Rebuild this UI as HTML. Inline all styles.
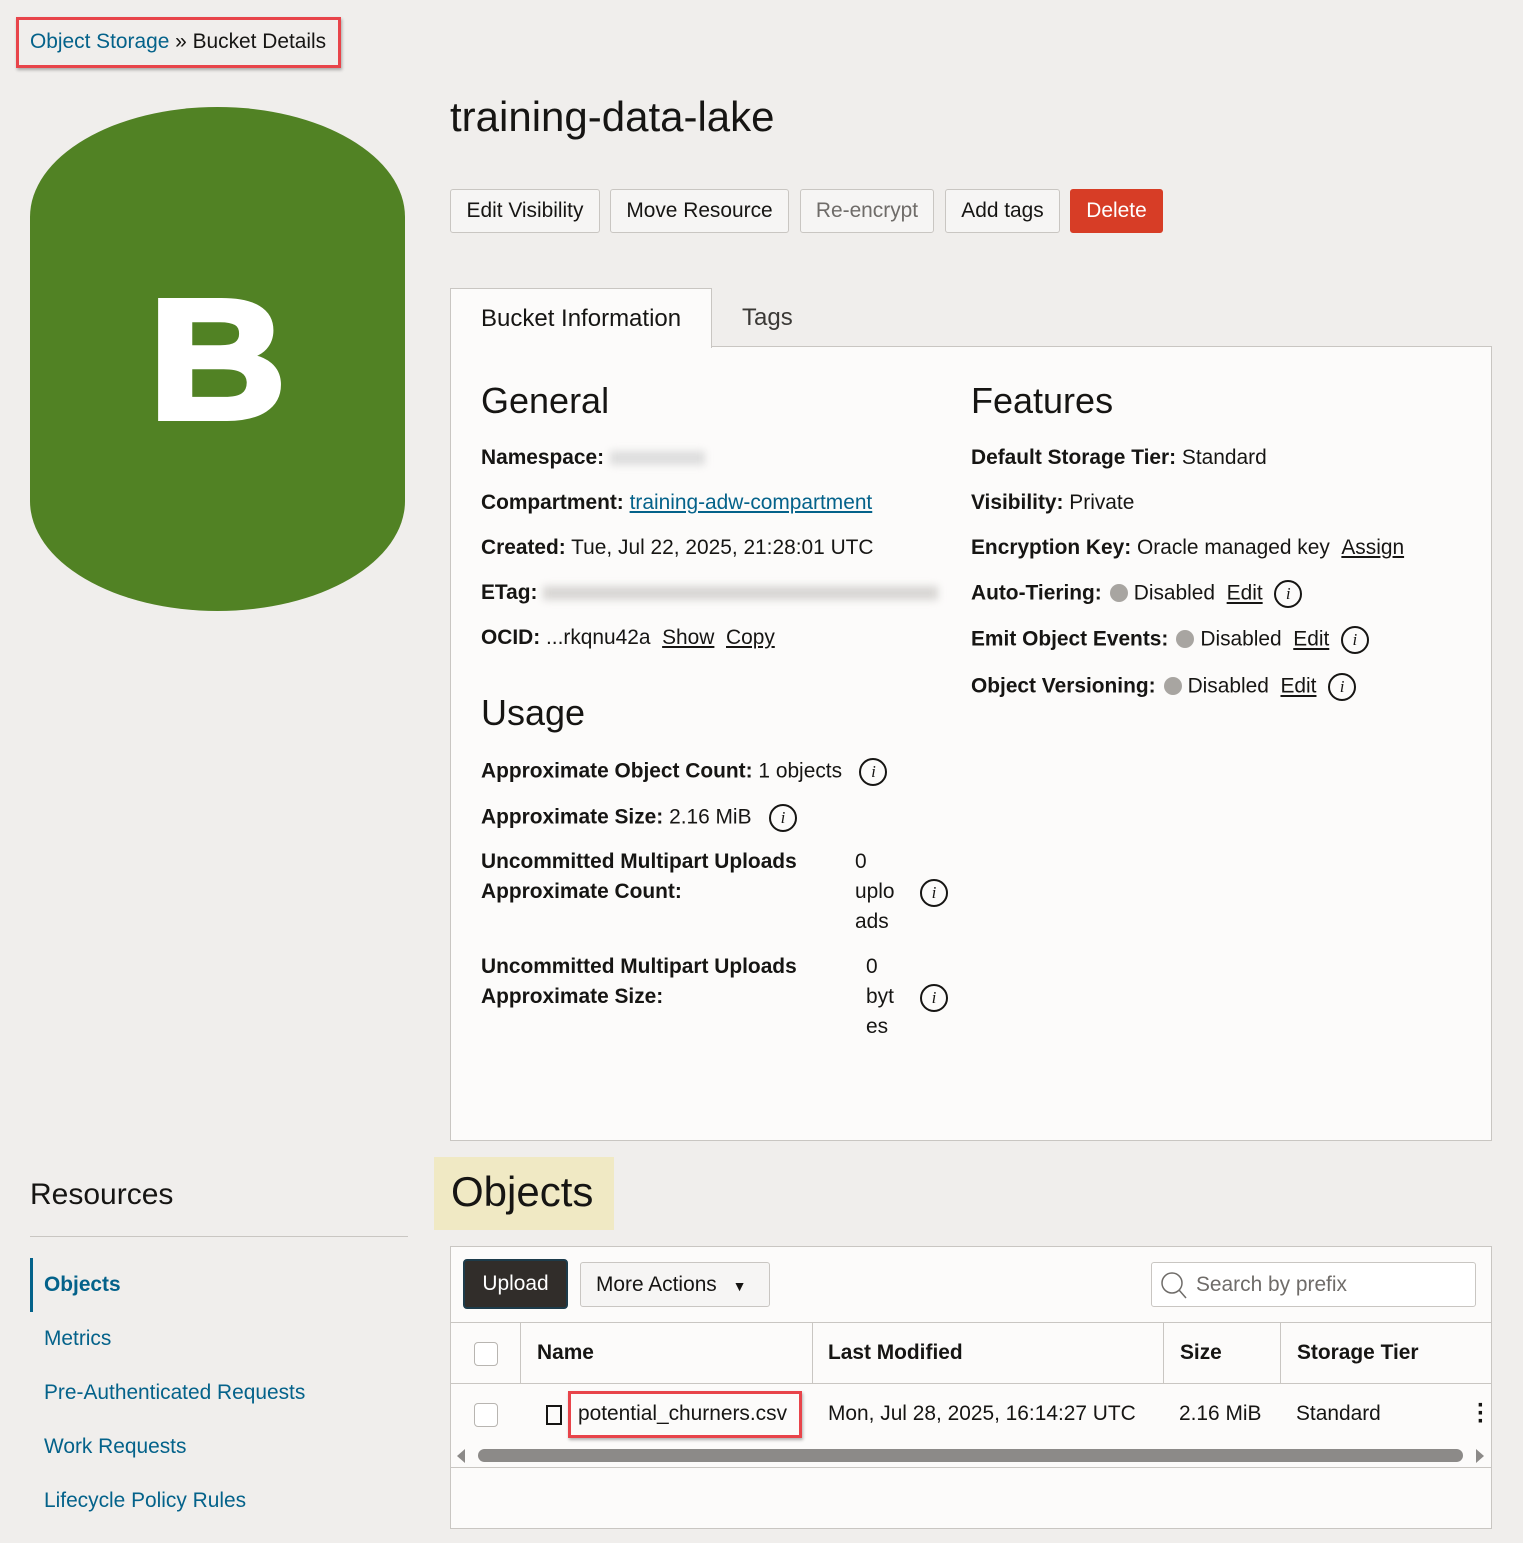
<!DOCTYPE html>
<html><head><meta charset="utf-8"><style>
*{box-sizing:border-box;margin:0;padding:0}
body{width:1523px;height:1543px;background:#f0eeec;font-family:"Liberation Sans",sans-serif;color:#161513;position:relative;overflow:hidden;font-size:20.9px}
.a{position:absolute;white-space:nowrap}
.btn{position:absolute;top:189px;height:44px;border:1px solid #c9c6c2;border-radius:3px;background:#f6f5f4;font-size:20.9px;line-height:42px;text-align:center}
a,.lk{color:#04628a;text-decoration:underline}
.u{color:#161513;text-decoration:underline}
b{font-weight:bold}
.info{display:inline-block;width:28px;height:28px;border:2px solid #161513;border-radius:50%;font:italic 17px "Liberation Serif",serif;text-align:center;line-height:24px;vertical-align:middle}
.dot{display:inline-block;width:18px;height:18px;border-radius:50%;background:#a8a5a1;vertical-align:-2px;margin:0 6px 0 8px}
.cb{position:absolute;width:24px;height:24px;border:1px solid #b8b5b1;border-radius:4px;background:#fff}
.nav{position:absolute;left:44px;color:#04628a;font-size:20.9px}
</style></head><body>
<div class="a" style="left:16px;top:17px;width:325px;height:51px;border:3px solid #e8444a;box-shadow:1px 2px 3px rgba(0,0,0,.3)"></div>
<div class="a" style="left:30px;top:30px"><span style="color:#04628a">Object Storage</span> » Bucket Details</div>

<div class="a" style="left:30px;top:107px;width:375px;height:504px;background:#518224;border-radius:50%/110px"></div>
<div class="a" style="left:30px;top:230px;width:375px;text-align:center;color:#fff;font-weight:bold;font-size:170px;line-height:260px;transform:scaleX(1.12);-webkit-text-stroke:6px #fff">B</div>

<div class="a" style="left:450px;top:93px;font-size:42px">training-data-lake</div>
<div class="btn" style="left:450px;width:150px">Edit Visibility</div>
<div class="btn" style="left:610px;width:179px">Move Resource</div>
<div class="btn" style="left:800px;width:134px;color:#6f6c69">Re-encrypt</div>
<div class="btn" style="left:945px;width:115px">Add tags</div>
<div class="btn" style="left:1070px;width:93px;background:#d73d26;border-color:#d73d26;color:#fff">Delete</div>

<div class="a" style="left:450px;top:346px;width:1042px;height:795px;border:1px solid #c9c6c2;background:#fcfbfa"></div>
<div class="a" style="left:450px;top:288px;width:262px;height:60px;border:1px solid #c9c6c2;border-bottom:none;background:#fcfbfa;font-size:24px;padding:16px 0 0 30px">Bucket Information</div>
<div class="a" style="left:742px;top:304px;font-size:24px;color:#3b3936">Tags</div>

<div class="a" style="left:481px;top:380px;font-size:36px">General</div>
<div class="a" style="left:481px;top:446px"><b>Namespace:</b> <span style="display:inline-block;width:95px;height:14px;background:#ddd;filter:blur(4px);vertical-align:middle"></span></div>
<div class="a" style="left:481px;top:491px"><b>Compartment:</b> <a>training-adw-compartment</a></div>
<div class="a" style="left:481px;top:536px"><b>Created:</b> Tue, Jul 22, 2025, 21:28:01 UTC</div>
<div class="a" style="left:481px;top:581px"><b>ETag:</b> <span style="display:inline-block;width:395px;height:14px;background:#d8d6d4;filter:blur(4px);vertical-align:middle"></span></div>
<div class="a" style="left:481px;top:626px"><b>OCID:</b> ...rkqnu42a &nbsp;<span class="u">Show</span> &nbsp;<span class="u">Copy</span></div>

<div class="a" style="left:481px;top:692px;font-size:36px">Usage</div>
<div class="a" style="left:481px;top:758px"><b>Approximate Object Count:</b> 1 objects &nbsp; <span class="info">i</span></div>
<div class="a" style="left:481px;top:804px"><b>Approximate Size:</b> 2.16 MiB &nbsp; <span class="info">i</span></div>
<div class="a" style="left:481px;top:847px;line-height:30px"><b>Uncommitted Multipart Uploads<br>Approximate Count:</b></div>
<div class="a" style="left:855px;top:847px;line-height:30px">0<br>uplo<br>ads</div>
<div class="a" style="left:920px;top:879px"><span class="info">i</span></div>
<div class="a" style="left:481px;top:952px;line-height:30px"><b>Uncommitted Multipart Uploads<br>Approximate Size:</b></div>
<div class="a" style="left:866px;top:952px;line-height:30px">0<br>byt<br>es</div>
<div class="a" style="left:920px;top:984px"><span class="info">i</span></div>

<div class="a" style="left:971px;top:380px;font-size:36px">Features</div>
<div class="a" style="left:971px;top:446px"><b>Default Storage Tier:</b> Standard</div>
<div class="a" style="left:971px;top:491px"><b>Visibility:</b> Private</div>
<div class="a" style="left:971px;top:536px"><b>Encryption Key:</b> Oracle managed key &nbsp;<span class="u">Assign</span></div>
<div class="a" style="left:971px;top:580px"><b>Auto-Tiering:</b><span class="dot"></span>Disabled &nbsp;<span class="u">Edit</span> &nbsp;<span class="info">i</span></div>
<div class="a" style="left:971px;top:626px"><b>Emit Object Events:</b><span class="dot"></span>Disabled &nbsp;<span class="u">Edit</span> &nbsp;<span class="info">i</span></div>
<div class="a" style="left:971px;top:673px"><b>Object Versioning:</b><span class="dot"></span>Disabled &nbsp;<span class="u">Edit</span> &nbsp;<span class="info">i</span></div>

<div class="a" style="left:30px;top:1178px;font-size:30px">Resources</div>
<div class="a" style="left:30px;top:1236px;width:378px;height:1px;background:#c9c6c2"></div>
<div class="a" style="left:30px;top:1258px;width:3px;height:54px;background:#04628a"></div>
<div class="nav" style="top:1273px;font-weight:bold">Objects</div>
<div class="nav" style="top:1327px">Metrics</div>
<div class="nav" style="top:1381px">Pre-Authenticated Requests</div>
<div class="nav" style="top:1435px">Work Requests</div>
<div class="nav" style="top:1489px">Lifecycle Policy Rules</div>

<div class="a" style="left:434px;top:1157px;width:180px;height:73px;background:#f0e9c4"></div>
<div class="a" style="left:451px;top:1168px;font-size:42px">Objects</div>

<div class="a" style="left:450px;top:1246px;width:1042px;height:283px;border:1px solid #c9c6c2;background:#fcfbfa"></div>
<div class="a" style="left:463px;top:1259px;width:105px;height:50px;background:#312d2a;border:2px solid #1d3b4a;border-radius:4px;color:#fff;text-align:center;line-height:46px">Upload</div>
<div class="a" style="left:580px;top:1262px;width:190px;height:45px;border:1px solid #c9c6c2;border-radius:3px;background:#f6f5f4;line-height:43px;padding-left:15px">More Actions <span style="font-size:14px;margin-left:10px">▼</span></div>
<div class="a" style="left:1151px;top:1262px;width:325px;height:45px;border:1px solid #c9c6c2;border-radius:3px;background:#fff;line-height:43px;padding-left:44px;color:#6f6c69">Search by prefix</div>
<svg class="a" style="left:1158px;top:1270px" width="32" height="32"><circle cx="14" cy="13" r="10" fill="none" stroke="#6f6c69" stroke-width="1.5"/><path d="M21 20l7 8" stroke="#6f6c69" stroke-width="1.5"/></svg>

<div class="a" style="left:451px;top:1322px;width:1040px;height:1px;background:#c9c6c2"></div>
<div class="a" style="left:451px;top:1383px;width:1040px;height:1px;background:#c9c6c2"></div>
<div class="a" style="left:520px;top:1323px;width:1px;height:60px;background:#c9c6c2"></div>
<div class="a" style="left:812px;top:1323px;width:1px;height:60px;background:#c9c6c2"></div>
<div class="a" style="left:1163px;top:1323px;width:1px;height:60px;background:#c9c6c2"></div>
<div class="a" style="left:1280px;top:1323px;width:1px;height:60px;background:#c9c6c2"></div>
<div class="cb" style="left:474px;top:1342px"></div>
<div class="a" style="left:537px;top:1341px;font-weight:bold">Name</div>
<div class="a" style="left:828px;top:1341px;font-weight:bold">Last Modified</div>
<div class="a" style="left:1180px;top:1341px;font-weight:bold">Size</div>
<div class="a" style="left:1297px;top:1341px;font-weight:bold">Storage Tier</div>

<div class="cb" style="left:474px;top:1403px"></div>
<div class="a" style="left:546px;top:1405px;width:16px;height:20px;border:2px solid #161513"></div>
<div class="a" style="left:568px;top:1391px;width:234px;height:47px;border:3px solid #e8444a;box-shadow:1px 2px 3px rgba(0,0,0,.3)"></div>
<div class="a" style="left:578px;top:1402px">potential_churners.csv</div>
<div class="a" style="left:828px;top:1402px">Mon, Jul 28, 2025, 16:14:27 UTC</div>
<div class="a" style="left:1179px;top:1402px">2.16 MiB</div>
<div class="a" style="left:1296px;top:1402px">Standard</div>
<div class="a" style="left:1477px;top:1402px;width:5px;font-weight:bold;line-height:8px;font-size:24px">·<br>·<br>·</div>
<div class="a" style="left:478px;top:1449px;width:985px;height:13px;border-radius:7px;background:#8c8a88"></div>
<div class="a" style="left:457px;top:1449px;width:0;height:0;border:7px solid transparent;border-right:8px solid #8c8a88;border-left:none"></div>
<div class="a" style="left:1476px;top:1449px;width:0;height:0;border:7px solid transparent;border-left:8px solid #8c8a88;border-right:none"></div>
<div class="a" style="left:451px;top:1467px;width:1040px;height:1px;background:#c9c6c2"></div>
</body></html>
